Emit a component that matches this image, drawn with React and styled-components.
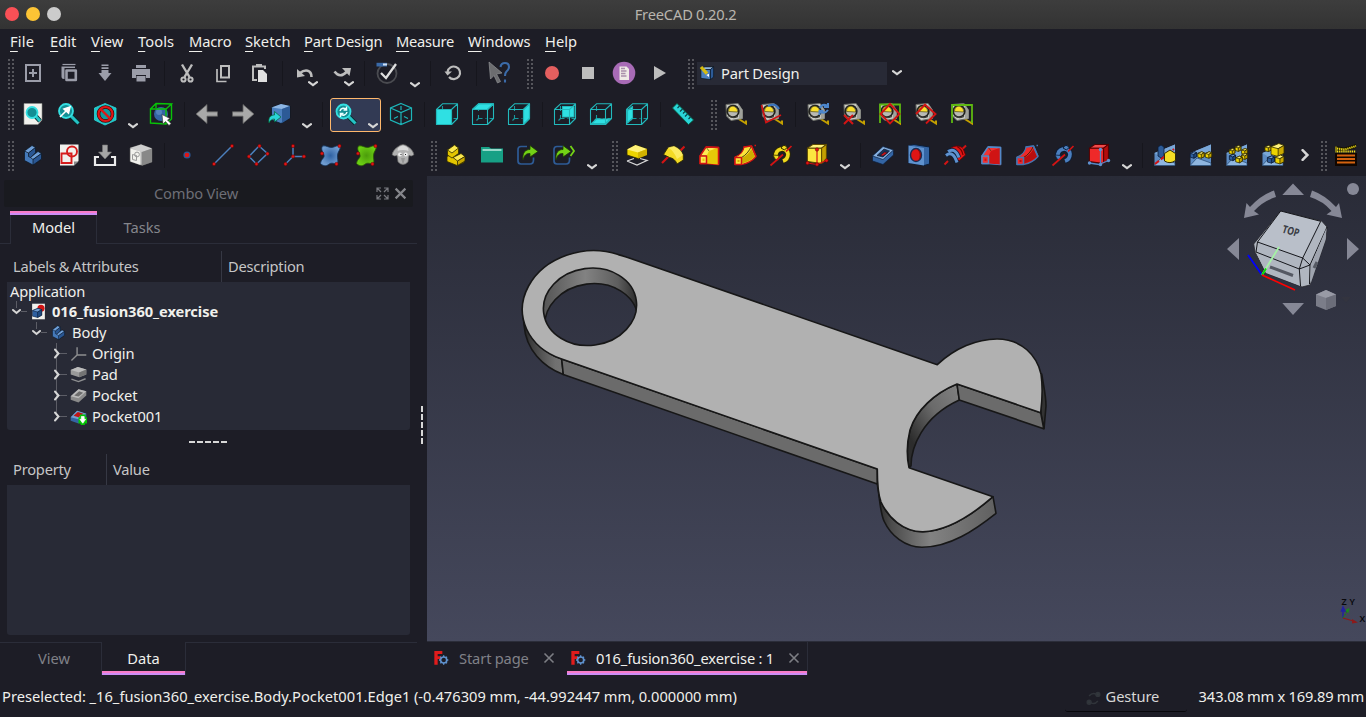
import React from 'react';
import styled, { createGlobalStyle, css } from 'styled-components';

const c = {
  bg: '#1d1d26', panel: '#282a36', line: '#2b2d39', text: '#f0f0ec', dim: '#6d6e76',
  grey: '#bdbdbd', yellow: '#fce94f', olive: '#302b00',
};

const Global = createGlobalStyle`
  * { box-sizing: border-box; }
  body { margin: 0; background: ${c.bg}; overflow: hidden; }
`;

/* ---------- layout ---------- */
const Window = styled.div`
  width: 1366px; height: 717px; display: flex; flex-direction: column; overflow: hidden;
  background: ${c.bg}; color: ${c.text}; font: 14.67px/20px "Noto Sans", sans-serif; white-space: nowrap;
  letter-spacing: -0.12px; word-spacing: -0.3px;
`;
const TitleBar = styled.header`
  height: 29px; flex: none; display: grid; grid-template-columns: 1fr auto 1fr; align-items: center;
  padding: 0 0 2px 5px; background: linear-gradient(#3d3d3d, #333333); color: #b9b5ae;
`;
const Title = styled.span`padding-top: 1px; line-height: 19px; letter-spacing: -0.17px;`;
const Lights = styled.div`display: flex; gap: 7px;`;
const Light = styled.i`width: 14px; height: 14px; border-radius: 50%; background: ${p => p.$color};`;
const MenuBar = styled.nav`height: 24px; flex: none; display: flex; padding: 2px 0 0 10px;`;
const MenuItem = styled.span`
  width: ${p => p.$w}px; letter-spacing: ${p => p.$ls || 0}px;
  u { text-underline-offset: 4px; text-decoration-thickness: 1px; }
`;
const ToolRow = styled.div`height: 41px; flex: none; display: flex; padding-top: 5px;`;
const Grip = styled.i`
  flex: none; width: 6px; height: 30px; margin: 1px 1px 0 ${p => (p.$first ? 8 : 10)}px;
  background: repeating-linear-gradient(transparent 0 2px, ${c.bg} 2px 4px),
    linear-gradient(90deg, #56565c 2px, transparent 2px 4px, #56565c 4px);
`;
const Divider = styled.i`flex: none; width: 1px; height: 25px; margin: 3px 4px 0 5px; background: #16161d;`;
const Tool = styled.button`
  flex: none; position: relative; display: flex; width: ${p => (p.$menu ? 56 : 36)}px; height: 32px;
  margin: 0; padding: 3px 6px; border: 0; background: none;
  ${p => p.$active && css`
    width: 51px; margin: -1px 2px 0 3px; height: 34px; padding: 3px;
    border: 1px solid #ffb86c; border-radius: 3px; background: #323a54;
  `}
`;
const Corner = styled.span`position: absolute; display: flex; right: ${p => p.$right}px; bottom: ${p => p.$up || 0}px;`;
const Overflow = styled.span`width: 20px; height: 30px; display: flex; align-items: center; justify-content: center; padding-left: 8px;`;
const Combo = styled.div`
  width: 190px; height: 23px; margin: 4px 4px 0 2px; padding: 0 2px 2px; display: flex; align-items: center; gap: 6px; background: ${c.panel};
`;
const ComboArrow = styled.span`padding: 10px 0 0 1px; display: flex; height: 20px;`;

const Main = styled.main`flex: none; height: 505px; display: flex;`;
const Side = styled.aside`width: 417px; flex: none; display: flex; flex-direction: column;`;
const DockTitle = styled.div`
  width: 409px; height: 27px; margin: 4px 0 0 4px; padding: 0 6px 1px 0; flex: none; border-radius: 2px; background: #191a1f; color: ${c.dim};
  display: grid; grid-template-columns: 12px 1fr auto auto; align-items: center; gap: 5px; text-align: center; 
  svg { margin-top: 1px; }
`;
const TopTabs = styled.div`height: 33px; margin-top: 4px; display: flex; flex: none;`;
const TopTab = styled.div`
  width: ${p => p.$w}px; text-align: center; padding-top: ${p => (p.$on ? 3 : 7)}px; color: ${p => (p.$on ? c.text : '#85868c')};
  letter-spacing: 0; border: 0 solid ${c.line}; line-height: ${p => (p.$on ? 20 : 19)}px;
  ${p => (p.$on
    ? css`border-width: 0 1px; &::before { content: ''; display: block; height: 4px; margin: -3px -1px 2px; background: linear-gradient(#f87cc8 50%, #cd8cf5 50%); }`
    : css`border-bottom-width: 1px;`)}
`;
const TabFill = styled.i`flex: ${p => (p.$w ? `0 0 ${p.$w}px` : 1)}; border: 0 solid ${c.line}; ${p => (p.$top ? 'border-top-width: 1px' : 'border-bottom-width: 1px')};`;
const Head = styled.div`height: 31px; margin: ${p => p.$mt}px 0 0 7px; display: flex; flex: none; color: #c6c6c6; letter-spacing: -0.22px; word-spacing: -0.5px;`;
const HeadCell = styled.div`width: ${p => p.$w}px; padding: 5px ${p => (p.$line ? 6 : 5)}px; border-left: 1px solid ${p => (p.$line ? '#363844' : 'transparent')};`;
const Tree = styled.div`width: 403px; height: ${p => p.$h}px; margin-left: 7px; flex: none; border-radius: 0 0 3px 3px; background: ${c.panel};`;
const Root = styled.div`height: 19px; padding-left: 3px; line-height: 18px; letter-spacing: -0.2px;`;
const Row = styled.div`
  height: 21px; display: flex; align-items: center; padding-left: ${p => p.$depth * 20}px; font-weight: ${p => (p.$bold ? 700 : 400)};
`;
const TreeIcon = styled.span`display: flex; margin: 0 5px 0 3px;`;
const Label = styled.span`padding-bottom: 2px; letter-spacing: ${p => (p.$bold ? -0.07 : -0.12)}px;`;
const HSplit = styled.i`width: 38px; height: 2px; margin: 11px 0 0 189px; flex: none; background: repeating-linear-gradient(90deg, #d8d8d8 0 6px, transparent 6px 8px);`;
const VSplit = styled.i`width: 2px; height: 38px; margin: 230px 4px 0; flex: none; background: repeating-linear-gradient(#d8d8d8 0 6px, transparent 6px 8px);`;
const View3D = styled.div`width: 939px; height: 465px; svg { display: block; }`;
const Work = styled.section`display: flex; flex-direction: column; flex: none; background: ${c.bg};`;
const BottomTabs = styled.div`height: 34px; margin-top: ${p => p.$mt}px; display: flex; flex: none; border-top: ${p => (p.$rule ? 1 : 0)}px solid #2b2d39;`;
const BottomTab = styled.div`
  width: ${p => p.$w}px; height: 33px; padding: ${p => (p.$on ? '6px 0 0' : '5px 0 0 7px')}; text-align: center; color: ${p => (p.$on ? c.text : '#808188')};
  letter-spacing: 0; border: 0 solid ${c.line}; border-top-width: ${p => (p.$on ? 0 : 1)}px;
  ${p => p.$on && css`
    border-width: 0 1px; display: flex; flex-direction: column; justify-content: space-between;
    &::after { content: ''; height: 4px; background: linear-gradient(#f87cc8 50%, #cd8cf5 50%); }
  `}
`;
const DocTab = styled.div`
  width: ${p => p.$w}px; height: 33px; display: flex; flex-direction: column; justify-content: space-between; color: ${p => (p.$on ? c.text : '#808188')};
  ${p => p.$on && css`
    border-right: 1px solid ${c.line};
    &::after { content: ''; height: 4px; background: linear-gradient(#f87cc8 50%, #cd8cf5 50%); }
  `}
`;
const DocLabel = styled.div`
  height: 29px; display: flex; align-items: center; padding: ${p => (p.$on ? '3px 7px 0 3px' : '3px 12px 0 6px')};
  span { flex: 1; padding: 0 0 1px 10px; }
`;
const Status = styled.footer`flex: 1; display: flex; align-items: center; padding: 0 2px 7px;`;
const Message = styled.span`flex: 1; letter-spacing: 0.02px;`;
const NavStyle = styled.span`
  width: 122px; height: 27px; display: flex; align-items: center; gap: 5px; padding-left: 21px; border-bottom: 1px solid #08080b; border-radius: 3px;
  margin: 3px 12px -3px 0; color: #d8d8d6; letter-spacing: -0.1px;
`;
const NavName = styled.span`padding-bottom: 4px;`;
const Dimensions = styled.span`letter-spacing: -0.12px; word-spacing: -0.4px;`;

/* ---------- drawings ---------- */
const Fixed = styled.svg`flex: none;`;
const Svg = ({ s = 24, children, vb = '0 0 24 24' }) => <Fixed width={s} height={s} viewBox={vb} fill="none">{children}</Fixed>;
const Chevron = ({ right, size = 10 }) => (
  <Svg s={size} vb="0 0 10 10"><path d={right ? 'M3 1 7 5 3 9' : 'M1 3.2 5 6.2 9 3.2'} stroke="#d6d6d6" strokeWidth="2.1" strokeLinecap="round" /></Svg>
);
const Close = ({ s = 12, color = '#7d7e84', w = 1.6 }) => <Svg s={s} vb="0 0 12 12"><path d="M1.500 1.500l9 9m0-9l-9 9" stroke={color} strokeWidth={w} /></Svg>;

const Lens = ({ x, y, r, tx, ty, children }) => (
  <g>
    <path d={`M${x + r * 0.7} ${y + r * 0.7}L${tx} ${ty}`} stroke="#042a2a" strokeWidth="4.6" />
    <path d={`M${x + r * 0.7} ${y + r * 0.7}L${tx} ${ty}`} stroke="#25c3c5" strokeWidth="3" />
    <circle cx={x} cy={y} r={r} fill="#138f94" stroke="#34e0e2" strokeWidth="1.8" />
    {children}
  </g>
);
const Wire = ({ fill }) => (
  <g stroke="#22b9bc" strokeWidth="1.1" strokeLinejoin="round">
    <path d="M7.5 4v5m0 4v3.500h4m4 0h-1M7.500 16.500L5.500 18.500M18.500 16.500H22" stroke="#179a9d" />
    {fill && <path d={fill} fill="#2fe0e3" />}
    <path d="M1.500 7.500h15v15h-15zM1.500 7.500L7.500 1.800H22.500L16.500 7.500M22.500 1.800V16.500L16.500 22.500" />
  </g>
);
const Cube = ({ x = 0, y = 0, s = 1, top = '#fff27a', left = '#edd400', right = '#c4a000', edge = c.olive, sw = 1 }) => (
  <g transform={`translate(${x} ${y}) scale(${s})`} stroke={edge} strokeWidth={sw / s} strokeLinejoin="round">
    <path d="M2 6L8 2H22L17 6z" fill={top} /><path d="M2 6H17V22L2 20z" fill={left} /><path d="M17 6L22 2V18L17 22z" fill={right} />
  </g>
);
const Blue = p => <Cube top="#9cc2ea" left="#4b80bf" right="#2c5a96" edge="#0b1521" {...p} />;
const Iso = ({ x, y, r, blue }) => {
  const [t, l, d, e] = blue ? ['#6f9dd3', '#2e5f9f', '#204a80', '#0b1d38'] : ['#fff27a', '#edd400', '#c9a800', c.olive];
  return (
    <g transform={`translate(${x} ${y}) scale(${r})`} stroke={e} strokeWidth={0.8 / r} strokeLinejoin="round">
      <path d="M-1-.5L.2-1 1-.7V.5L.1 1-1 .7z" fill={l} /><path d="M-1-.5L.2-1 1-.7 .1-.2z" fill={t} /><path d="M.1-.2L1-.7V.5L.1 1z" fill={d} />
    </g>
  );
};
const Tape = () => (
  <g>
    <path d="M14 16.500L22 21.500V18.500" stroke="#c4a000" strokeWidth="2" />
    <path d="M2 2.500L14 1.500 18.500 8V16.500L7 18.500 2.500 14z" fill="#cbccc6" stroke="#6c6e68" />
    <path d="M14 1.500L18.500 8V16.500L15 17V6z" fill="#9fa19b" />
    <ellipse cx="9" cy="9.300" rx="5.800" ry="5.800" fill="#b9bab4" stroke="#22231f" strokeWidth="1.700" transform="rotate(20 9 9.300)" />
    <path d="M7 4.500A5 5 0 0 1 13.500 10L4.500 9.500A5 5 0 0 1 7 4.500z" fill="#fadf2d" stroke="#3a3500" strokeWidth=".6" />
    <path d="M4 13.500Q9 17 14 14.500" stroke="#3b3c37" strokeWidth="1.300" />
  </g>
);
const Dot = ({ p }) => p.map(([x, y], i) => <circle key={i} cx={x} cy={y} r="1.700" fill="#e01515" stroke="#5a0000" strokeWidth=".5" />);
const BodyShape = ({ a = '#6f9fd8', b = '#4479ba', d = '#2a5692', e = '#0b1521' }) => (
  <g stroke={e} strokeWidth=".7" strokeLinejoin="round">
    <path d="M3.500 8L11 2.500 14.500 4.500V10L17 8.500 20.500 10.500V16L12 22 3.500 17.500z" fill={b} />
    <path d="M3.500 8L11 2.500 14.500 4.500 7.500 10z" fill={a} /><path d="M7.500 10L14.500 4.500V9.500L9.500 14.500 7.500 13.500z" fill={d} />
    <path d="M9.500 14.500L17 8.500 20.500 10.500 12 16.500z" fill={a} /><path d="M12 16.500L20.500 10.500V16L12 22z" fill={d} />
  </g>
);
const Patch = ({ a, b, e, id }) => (
  <g>
    <radialGradient id={id}><stop offset="0" stopColor={b} /><stop offset="1" stopColor={a} /></radialGradient>
    <path d="M3.500 3C7 2 10 5 13 4.500S18 2 21.500 2.500C22 6 19 8 18.500 12S20 18 18 21.500C14 20 12 19.500 9.500 21.500S4 23 1.500 20.500C2 16 6 15 5 12S1.500 6 3.500 3z" fill={`url(#${id})`} stroke={e} strokeWidth=".8" />
  </g>
);
const Arrow = () => <path d="M8 17C7 9 11 6.500 15 6.500V2.500L23 8.500 15 14V10.500C11 10.500 9.500 12 8 17z" fill="#73d216" stroke="#1d3a05" strokeWidth=".8" />;
const LinkBox = () => <path d="M11 3.500H5Q2 3.500 2 6.500V18Q2 21 5 21H14Q17.500 21 17.500 17V14.500" stroke="#2e5b96" strokeWidth="1.700" />;

/* additive and subtractive solids share the same silhouettes */
const Loft = ({ a, b, e }) => (
  <g stroke={e} strokeWidth="1.500" strokeLinejoin="round">
    <path d="M3 13L9 4 21.500 4.500V21.500L9.500 20.500H3z" fill={a} />
    <path d="M9.500 13L12 8 21.500 4.500V21.500L9.500 20.500z" fill={b} stroke="none" />
    <path d="M9 4L12 8M3 13H9.500V20.500H3z" stroke={c.olive} strokeWidth=".6" />
    <path d="M9 4L21.500 4.500V21.500" /><path d="M3 13H9.500V20.500H3z" fill={a} /><path d="M5.500 15.500h2V18h-2z" fill={b} stroke="none" />
  </g>
);
const Pipe = ({ a, b, e }) => (
  <g strokeLinejoin="round">
    <path d="M2 14Q10 11 11 4L18.500 3 23 13.500Q18 19.500 9 21.500H2z" fill={a} stroke={e} strokeWidth="1.200" />
    <path d="M9 15Q15 12 18.500 6L22 13.500Q17 18.500 9 20.500z" fill={b} />
    <path d="M8.500 14.500Q15 11 18.500 3" stroke="#201a00" strokeWidth=".8" />
    <path d="M10.500 4L18.500 3 23 13.500" stroke={e} strokeWidth="1.700" />
    <path d="M2 14.500H8.500V21.500H2z" fill={a} stroke={e} strokeWidth="1.500" /><path d="M4.500 17h2v2h-2z" fill={b} /><path d="M21.500 2.500h1.500" stroke={e} strokeWidth="1.700" />
  </g>
);
const Helix = ({ a, e, rod }) => (
  <g>
    <path d="M7 14C5 5 18 3 19 11 19 15 17 17 14 18" stroke={e} strokeWidth="5.400" /><path d="M7 14C5 5 18 3 19 11 19 15 17 17 14 18" stroke={a} strokeWidth="3.700" />
    <path d="M12 5Q15 0 18 4.500L15.500 7z" fill={a} stroke={e} /><path d="M4 12L10 12.500 9 17.500 6 16z" fill={a} stroke={e} strokeWidth=".8" />
    <path d="M1.500 22.500L14 11.500M17 8.500L22.500 3" stroke={rod} strokeWidth="1.700" />
  </g>
);
const Wedge = ({ children }) => <g><path d="M1.500 10L22 1.500V22.500H1.500z" fill="#5d8cc4" /><path d="M1.500 22L8 15 22 20V22.500H1.500z" fill="#8fb6e0" stroke="#23466f" strokeWidth=".7" /><path d="M1.500 10L22 1.500V10L9 15z" fill="#7aa7d8" />{children}</g>;

const g = '#9b9da9', G = c.grey;
const icons = {
  new: <path d="M5 4H19V20H5zM12 8v8M8 12h8" stroke={g} strokeWidth="2" />,
  open: <g stroke={g}><path d="M5.500 3.500h13" strokeWidth="1.200" /><path d="M4.500 5.500H18V7H7.500V18H7Q4.500 18 4.500 15.500z" fill={g} stroke="none" /><path d="M9.500 9.500H18.800V19H9.500z" strokeWidth="2.600" strokeLinejoin="round" /></g>,
  save: <path d="M8.500 3.500h7v1.600h-7zM8.500 6.200h7v1.700h-7zM8.500 9h7v3H18.500L12 20 5.500 12h3z" fill={g} />,
  print: <g fill={g}><path d="M7 4h10v3H7zM3 8h18v9h-4v-3H7v3H3z" /><path d="M7.500 15h9v5.500h-9z" /></g>,
  cut: <g stroke={G} strokeWidth="2"><path d="M7 3.500L14.500 16M17 3.500L9.500 16" strokeWidth="2.400" /><circle cx="8.500" cy="18.500" r="2.100" /><circle cx="15.500" cy="18.500" r="2.100" /></g>,
  copy: <g stroke={G} strokeWidth="2"><path d="M10 5H18V16.500H10z" /><path d="M6 8V20.500H15.500" strokeWidth="1.700" /></g>,
  paste: <g><path d="M10 19H6V5.500H18V8" stroke={G} strokeWidth="2" /><path d="M9 3h6v3H9z" fill={G} /><path d="M11 9h5l4 4v8h-9z" fill="#e0e0e0" /></g>,
  undo: <g><path d="M18.500 16C18.500 8.500 12 8 7 12" stroke={G} strokeWidth="2.600" /><path d="M4 8V16.500L12 15z" fill={G} /></g>,
  redo: <g><path d="M5.500 10.500Q11 18 18 10.500" stroke={G} strokeWidth="2.600" /><path d="M13 7L22 7 20.500 15z" fill={G} /></g>,
  check: <g><circle cx="12" cy="12.500" r="9.500" stroke="#4a4b50" strokeWidth="1.800" /><path d="M6 12L11 17 21 3" stroke="#e0e0e0" strokeWidth="2.300" /><path d="M1.500 1.800H12V5.500H1.500z" fill="#3a6aa8" /><path d="M8 2.500h4v2H8z" fill="#cfe0f5" /></g>,
  refresh: <g><path d="M8 16A6.300 6.300 0 1 0 6.500 11" stroke={G} strokeWidth="2.200" /><path d="M3.500 10.500h7.500L6.500 14.500z" fill={G} /></g>,
  whats: <g><path d="M2 1L15 12 9.500 13 13.500 20.500 10.500 22 7 14.500 3.500 18z" fill="#6c6d70" stroke="#8f9093" strokeWidth=".7" /><path d="M13.500 6Q14 2 18 2T22 6Q22 8.500 19.500 10.500 18 12 18 15M18 18.500v3" stroke="#3b6ba9" strokeWidth="2.100" /></g>,
  record: <circle cx="12" cy="12" r="7" fill="#e45f5f" />,
  stop: <path d="M6 6h12v12H6z" fill={G} />,
  macro: <g><circle cx="12" cy="12" r="11.300" fill="#a86bb6" /><path d="M7.500 5.500H14.500L17 8V19H7.500z" fill="#efeae6" /><path d="M9 10h5.500M9 12.500h4.500M9 15h5.500M9 7.500h4" stroke="#a98fab" strokeWidth="1.300" /></g>,
  play: <path d="M6 5L18 12 6 19z" fill={G} />,
  pd: <g><Blue x={1} y={1} s={.95} /><path d="M3 3L12 13" stroke="#d6bc10" strokeWidth="5" /><path d="M11 15l4 3v-5z" fill="#fff" /></g>,

  fitAll: <g><path d="M3 1.500H21V18L17 22.500H3z" fill="#f1f1ed" stroke="#8b8d88" strokeWidth=".6" /><Lens x={11} y={10.5} r={5.5} tx={19} ty={19} /></g>,
  fitSel: <Lens x={9} y={9} r={7} tx={21.5} ty={21.5}><path d="M3 15L9 9M7 7l6-2-1.500 6z" fill="#fff" stroke="#fff" strokeWidth="1.600" /></Lens>,
  style: <g><path d="M12 1.500L23 6V18L12 23 1.500 18V6z" fill="#20c6c9" stroke="#2bd4d6" strokeWidth=".8" /><circle cx="12.500" cy="12" r="7" fill="#0f9a9d" stroke="#420606" strokeWidth="3.600" /><path d="M8 7.500l9 9" stroke="#e01515" strokeWidth="2.400" /><circle cx="12.500" cy="12" r="7" stroke="#e01515" strokeWidth="2.200" /></g>,
  box: <g><circle cx="12" cy="12" r="7" fill="#3465a4" /><circle cx="10" cy="10" r="3" fill="#729fcf" opacity=".5" /><path d="M1.500 7H17V22L1.500 21zM1.500 7L7 1.500 22.500 2 17 7M22.500 2V17L17 22M7 2V6" stroke="#08c408" strokeWidth="1.400" /><path d="M13 12.500L14 22 16.500 19.500 20 23.500 22 21.500 18.500 18 21 16.500z" fill="#fff" stroke="#333" strokeWidth=".6" /></g>,
  back: <path d="M1 12L12 2.500V9.800H22.500V14.200H12V21.500z" fill="#a9a9a9" stroke="#5f5f5f" strokeWidth=".8" />,
  fwd: <path d="M23 12L12 2.500V9.800H1.500V14.200H12V21.500z" fill="#a9a9a9" stroke="#5f5f5f" strokeWidth=".8" />,
  link: <g><path d="M4.500 5.500L14 2 23 4V16L14 21.500 4.500 18z" fill="#4b80bf" stroke="#0b1521" strokeWidth=".8" /><path d="M4.500 5.500L14 2 23 4 15 7z" fill="#8db6e4" /><path d="M15 7L23 4V16L15 21z" fill="#2c5a96" /><path d="M2 21C1 15 4 13 7.500 13V9.500L14 15 7.500 20V17C5 17 3.500 18 2 21z" fill="#2ad5d8" stroke="#063" strokeWidth=".7" /></g>,
  sync: <Lens x={9.5} y={9.5} r={7} tx={21.5} ty={21.5}><path d="M6 9A3.800 3.800 0 0 1 12.500 7.500M13 10A3.800 3.800 0 0 1 6.500 12M12.500 4.500V8H9.500M6.500 15V11.500H9.500" stroke="#e8ffff" strokeWidth="1.500" /></Lens>,
  iso: <path d="M12 1.500L22.500 6V18L12 22.500 1.500 18V6zM1.500 6L12 10.500 22.500 6M12 10.500V22.500M12 4V8M5 16.500L9 14.500M19 16.500L15 14.500" stroke="#1db6b9" strokeWidth="1.200" />,
  front: <Wire fill="M1.500 7.500h15v15h-15z" />, top: <Wire fill="M1.500 7.500L7.500 1.800H22.500L16.500 7.500z" />, right: <Wire fill="M16.500 7.500L22.500 1.800V16.500L16.500 22.500z" />,
  rear: <Wire fill="M9.500 4.500H21V15H9.500z" />, bottom: <Wire fill="M2.500 21.500L7.500 17H21L16.500 21.500z" />, left: <Wire fill="M2.500 8.500L7.500 4.500V16L2.500 21z" />,
  ruler: <g><path d="M6 1.500L22.500 18 17.500 22.500 1.500 6z" fill="#2ad5d8" stroke="#064" strokeWidth=".8" /><path d="M8.500 4L6.500 6M11.500 7L9 9.500M14 9.500L12 11.500M16.500 12L14 14.500M19.500 15L17.500 17" stroke="#0a4446" strokeWidth="1.100" /></g>,
  tape: <Tape />,
  tapeAngle: <g><Tape /><path d="M8 4Q15 0 19 7" stroke="#3b74bd" strokeWidth="2.200" /><path d="M1.500 3L6 20.500 21 13" stroke="#d21414" strokeWidth="1.700" /></g>,
  tapeRefresh: <g><Tape /><path d="M14 6Q16 1.500 21 3.500M22 1v4h-4M22 8Q19 12 14.500 10M13.500 13V9h4" stroke="#4c86cc" strokeWidth="2" /></g>,
  tapeX: <g><Tape /><path d="M2 13l9 9m0-9l-9 9" stroke="#d21414" strokeWidth="2" /></g>,
  tapeAll: <g><Tape /><path d="M2 21V2.500H22V21" stroke="#5eb811" strokeWidth="1.800" /><path d="M12 2L21.500 12 12 21.500 2.500 12z" stroke="#d21414" strokeWidth="1.900" /></g>,
  tape3d: <g><Tape /><path d="M2 12L11 2.500 21.500 12 12 21.500" stroke="#d21414" strokeWidth="1.900" /></g>,
  tapeDelta: <g><Tape /><path d="M2 21V3H22V21" stroke="#5eb811" strokeWidth="1.800" /></g>,

  body: <BodyShape />,
  sketch: <g><path d="M3 1.500H21.500V18L17 22.500H3z" fill="#f1f1ed" /><path d="M17 22.500V18.500H21.500z" fill="#888" /><path d="M4.500 10.500H14.500V20H4.500z" stroke="#d51c1c" strokeWidth="1.900" /><circle cx="15" cy="8.500" r="5" stroke="#d51c1c" strokeWidth="1.900" /></g>,
  attach: <g><path d="M6 14H2V22H22V14H18" stroke="#ececec" strokeWidth="2.200" /><path d="M9.500 2h5v7H18.500L12 16 5.500 9h4z" fill="#a6a6a6" stroke="#777" strokeWidth=".6" /></g>,
  map: <g><path d="M1 5L12 1.500 23 5.500V19L13 22.500 1 18.500z" fill="#adadad" stroke="#4f4f4f" strokeWidth=".7" /><path d="M1 5L12 1.500 23 5.500 13 9z" fill="#cfcfcf" /><path d="M13 9L23 5.500V19L13 22.500z" fill="#888" /><path d="M1.500 5.500L11.500 8.500V22L1.500 18.500z" fill="#f1f1ed" /><path d="M3.500 11.500L7.500 12.500V17.500L3.500 16.500z" stroke="#9a9a9a" /><circle cx="8" cy="11.500" r="2.400" stroke="#9a9a9a" /></g>,
  point: <g><circle cx="12" cy="12" r="3.600" fill="#2b5691" /><circle cx="12" cy="12" r="2.300" fill="#e01515" /></g>,
  line: <g><path d="M3 21L21 3" stroke="#4c80bd" strokeWidth="1.500" /><Dot p={[[3, 21], [21, 3]]} /></g>,
  plane: <g><path d="M12 3L20.500 10.500 9.500 21 2 13.500z" stroke="#4c80bd" strokeWidth="1.500" /><Dot p={[[12.500, 3], [20.500, 10.800], [9.500, 21], [2, 13.500]]} /></g>,
  lcs: <g><path d="M10 3V13.500L2.500 21M10 13.500H21" stroke="#4c80bd" strokeWidth="1.500" /><Dot p={[[10, 3], [10, 13.500], [2.500, 21], [21, 13.500]]} /></g>,
  binder: <g><Patch id="pb" a="#6f9cd0" b="#2f62a3" e="#12335c" /><Dot p={[[20.500, 3], [3, 10.500], [17.500, 21]]} /></g>,
  sub: <g><Patch id="pg" a="#6ccf14" b="#4c9c0b" e="#2a5a04" /><Dot p={[[20.500, 3], [3, 10.500], [17.500, 21]]} /></g>,
  sheep: <g><path d="M6.500 4Q12-1 17.500 4 22 7 23 11.500 21 14 18 12.500L17 19Q12 24 7 19L6 12.500Q3 14 1 11.500 2 7 6.500 4z" fill="#b2b2b2" stroke="#5f5f5f" strokeWidth=".7" /><path d="M7 5Q12 0 17 5L17.500 8Q12 6 6.500 8z" fill="#d9d9d9" /><path d="M10 15L12 22 14 15z" fill="#969696" /><circle cx="9" cy="11.500" r="1.900" fill="#eee" /><circle cx="14.800" cy="11.500" r="1.900" fill="#eee" /><path d="M9.500 11.500h1M14 11.500h1" stroke="#222" /></g>,

  part: <g stroke={c.olive} strokeWidth=".8" strokeLinejoin="round"><path d="M3 13.500L8 11 20 15V19.500L13 22.500 3 18.500z" fill="#e3c500" /><path d="M9 14.500L17 10.500 21 13.500 13.500 18z" fill={c.yellow} /><path d="M13.500 18L21 13.500V18L13.500 22.500z" fill="#c9a800" /><path d="M3.500 7L10.500 2 14.500 5V10.500L8 15 3.500 12z" fill="#e3c500" /><path d="M3.500 7L10.500 2 14.500 5 8 10z" fill={c.yellow} /></g>,
  folder: <g><path d="M1 4H9L11 5.500H23V19.500H1z" fill="#17a085" /><path d="M2.500 7H21.500" stroke="#e9fff9" strokeWidth="1.200" /></g>,
  linkTo: <g><LinkBox /><g transform="translate(-1 0)"><Arrow /></g></g>,
  linkSub: <g><LinkBox /><g transform="translate(-4 0)"><Arrow /></g><path d="M18.500 3L22 8 18.500 13" stroke="#73d216" strokeWidth="1.800" /></g>,
  pad: <g><path d="M2 18L9 15.500M15 15.500L22 17.500 12 22 2 18" stroke="#d8d8d8" strokeWidth="1.300" /><path d="M2 6.500L10.500 2 22 6V12L13 15.500 2 12z" fill="#edd400" stroke={c.olive} strokeWidth=".8" /><path d="M2 6.500L10.500 2 22 6 13 9.500z" fill="#fff27a" /><path d="M13 9.500L22 6V12L13 15.500z" fill="#d2b300" /></g>,
  revolve: <g><path d="M1 20L8 13M19 8L23.500 3.500" stroke="#d21414" strokeWidth="2.200" /><path d="M2.500 11.500L7 4.500 13 3Q20 6 22.300 12V17L16 21Q14 15.500 8.500 14.500z" fill="#f3da24" stroke={c.olive} strokeWidth=".9" strokeLinejoin="round" /><path d="M7 4.500L13 3Q20 6 22 12L16 16Q13 8 7 4.500z" fill="#fff27a" opacity=".7" /></g>,
  loft: <Loft a="#fdea55" b="#e6ca08" e="#d21414" />, pipe: <Pipe a="#fbe33a" b="#cfae00" e="#d21414" />,
  helix: <Helix a="#f0d91e" e={c.olive} rod="#d21414" />,
  prim: <g><Cube x={.5} y={-.5} s={.95} left="#fbe640" edge="#5c4a00" /><path d="M2 20L12 21.500 21.500 17.500M12 21.500V6" stroke="#d21414" strokeWidth="1.200" /><Dot p={[[2.500, 20], [12, 21.500], [21.500, 17.500], [12, 6.500]]} /></g>,
  pocket: <g stroke="#0b1d38" strokeWidth=".7" strokeLinejoin="round"><path d="M1.500 13L12 3.500 22.500 7V12L12 21.500 1.500 18z" fill="#3465a4" /><path d="M1.500 13L12 3.500 22.500 7 12 16.500z" fill="#86b0e0" /><path d="M6 12.500L13 6 18.500 8 12 14z" fill="#1c3355" /><path d="M9 12.500L13.500 9 17 9.500 12 13z" fill="#d21414" /></g>,
  hole: <g><path d="M1.500 2.500L7 1.500 22.500 4V21L17 22.500 1.500 20z" fill="#3465a4" stroke="#0b1d38" /><path d="M1.500 2.500L17 5V22.500L1.500 20z" fill="#5f92cf" /><ellipse cx="9" cy="12" rx="5.500" ry="6.500" fill="#e01515" stroke="#1c2c50" strokeWidth="1.400" /><path d="M10 6a5 6.500 0 0 1 1 12 9 9 0 0 0-1-12" fill="#7d0a0a" /></g>,
  groove: <g><path d="M8 5Q14 1 20 5L22.500 12 16 18 9 12z" fill="#e01515" stroke="#600" strokeWidth=".8" /><path d="M3 12.500Q10 7 14 19.500M5 8.500Q12 4 16 14.500" stroke="#0b1d38" strokeWidth="4.400" /><path d="M3 12.500Q10 7 14 19.500M5 8.500Q12 4 16 14.500" stroke="#5f92cf" strokeWidth="3" /><path d="M14 3.500Q19 6 20 12" stroke="#700" strokeWidth="1.200" /><path d="M1.500 21.500L5 18M20 5.500L23 2.500" stroke="#d21414" strokeWidth="2" /></g>,
  subLoft: <Loft a="#ef3333" b="#d01414" e="#5488c7" />, subPipe: <Pipe a="#ef2929" b="#b80e0e" e="#4575b2" />,
  subHelix: <Helix a="#4b7fbe" e="#0b1d38" rod="#d21414" />,
  subPrim: <g><Cube x={.5} y={-.5} s={.95} top="#f04a4a" left="#ef2929" right="#b30c0c" edge="#500" /><path d="M2 20L12 21.500 21.500 17.500M13.500 21V6" stroke="#5488c7" strokeWidth="1.300" />{[[2.500, 20], [13.500, 21.500], [21.500, 17.500], [13.500, 6.500]].map(([x, y]) => <circle key={x + y} cx={x} cy={y} r="1.700" fill="#5f92cf" />)}</g>,
  mirror: <Wedge><path d="M5 4L8 2 11 4V13L8 15 5 13z" fill="#2c5a96" stroke="#0b1d38" strokeWidth=".8" /><path d="M2 21l19-15" stroke="#d21414" strokeWidth="2" strokeDasharray="5 2.500" /><path d="M11.500 10.500L17 7 22.500 10.500V17.500Q17 21.500 11.500 18z" fill="#f5de25" stroke={c.olive} /></Wedge>,
  linear: <Wedge><Iso blue x={4.500} y={12} r={3.200} /><Iso x={12} y={12} r={3.200} /><Iso x={19.500} y={12} r={3.200} /></Wedge>,
  polar: <Wedge><Iso x={13} y={5.500} r={2.900} /><Iso x={7} y={8.500} r={2.900} /><Iso x={19.500} y={8.500} r={2.900} /><Iso blue x={7.500} y={14.500} r={3.100} /><Iso x={19.500} y={13.500} r={2.900} /><Iso x={14} y={16.500} r={3.300} /></Wedge>,
  multi: <Wedge><Iso x={7} y={5.500} r={3.100} /><Iso x={16.500} y={7} r={6.500} /><Iso blue x={10} y={16.500} r={3.600} /><Iso x={18.500} y={16.500} r={4.400} /></Wedge>,
  clap: <g><path d="M1 10H23V23H1z" fill="#100600" /><path d="M1.500 3L10 4.500 22 1V5L10 8 1.500 9z" fill="#171300" /><path d="M2 3.500V9.500" stroke="#f3df1a" /><path d="M3 5.500L11 6.500 22 3M3 8.500H22" stroke="#f3df1a" strokeWidth="2" strokeDasharray="1.300 .8" /><path d="M3 12.500H21M3 16H21M3 19.500H21" stroke="#d4620f" strokeWidth="1.900" /></g>,
  doc: <g><path d="M3 1H21V23H3z" fill="#f1f1ed" /><circle cx="15.500" cy="7.500" r="5" fill="#d21414" /><Iso blue x={10} y={14} r={6.500} /></g>,
  origin: <path d="M10 3V14L2 22M10 14H23" stroke="#8d8e90" strokeWidth="2" />,
  padGrey: <g><path d="M2 18.500L12 22 22 18" stroke="#8d8e90" strokeWidth="2" /><path d="M1 5.500L11 1.500 23 5V12L13 16 1 12z" fill="#9a9a9a" /><path d="M1 5.500L11 1.500 23 5 13 9z" fill="#bcbcbc" /><path d="M13 9L23 5V12L13 16z" fill="#747474" /></g>,
  pocketGrey: <g><path d="M1 13L12 3 23 6V12L12 22 1 18z" fill="#8a8a8a" /><path d="M1 13L12 3 23 6 12 16z" fill="#b9b9b9" /><path d="M6 12L13 6 18.500 8 12 13.500z" fill="#6c6c6c" /></g>,
  pocketTip: <g><path d="M1 13L10 4 23 8V14L12 22 1 18z" fill="#3465a4" /><path d="M1 13L10 4 23 8 12 16z" fill="#729fcf" /><path d="M5 11L11 5.500 19 8 12 13z" fill="#c01414" /><path d="M14 9h8v4h2v9h-3v2h-6v-2h-3v-9h2z" fill="#05c405" /><path d="M16 12h4v4h2L18 21.500 14 16h2z" fill="#fff" stroke="#fff" /></g>,
  fc: <g><path d="M2 1.500H14V6H7V9.500H12V13.500H7V22H2z" fill="#e01c1c" /><circle cx="16" cy="15" r="4.600" stroke="#5f92cf" strokeWidth="2.400" /><path d="M16 8v3M16 19v3M9 15h3M20 15h3M11 10l2 2M19 18l2 2M21 10l-2 2M13 18l-2 2" stroke="#5f92cf" strokeWidth="2" /></g>,
  gesture: <g stroke="#30343a" strokeWidth="2.500"><path d="M5 8Q10 2 16 5M19 16Q14 22 8 19" /><circle cx="19" cy="5.500" r="3" fill="#33383d" /><circle cx="5" cy="18" r="3" fill="#33383d" /></g>,
};

const T = ({ i, menu, active, corner }) => (
  <Tool $menu={menu} $active={active}>
    <Svg>{icons[i]}</Svg>
    {(menu || active || corner) && <Corner $right={active ? 2 : 5} $up={corner ? 1 : 0}><Chevron /></Corner>}
  </Tool>
);
const Tools = ({ names }) => names.split(' ').map((n, k) => {
  if (n === '|') return <Divider key={k} />;
  if (n === ':') return <Grip key={k} $first={k === 0} />;
  const flag = n.slice(-1);
  const id = n.replace(/[+*^]$/, '');
  return <T key={k} i={id} menu={flag === '+'} active={flag === '*'} corner={flag === '^'} />;
});

const TOP = 'M561.7 359A67.2 55.4 -7.8 0 1 618.3 254.6Q623 255.800 627 257.300L937.3 364.7C955 348 977 339 997 339C1022 339 1037 356 1041 374C1043 388 1042 402 1040.7 412.7L957 384C935 393 916 410 910 430C907 442 906.5 456 909 467.7L993 496.7C972 515 948 531 923 531.7C903 532 888 517 881 502C878 494 877.3 482 877.3 469Z';
const HOLE = 'M543.7 313.1A46.2 38.1 -7.8 0 1 636.3 300.5A46.2 38.1 -7.8 0 1 543.7 313.1Z';

const Model = () => (
  <g stroke="#171717" strokeWidth="1.600" strokeLinejoin="round">
    <path d="M522.600 309C524 335 542 352 561.700 359L563.300 374.500C543 367 526 350 524 325z" fill="url(#arcSide)" />
    <path d="M561.700 359L877.300 469V484L563.300 374.500z" fill="#6b6b6b" />
    <path d="M877.300 484C880 500 880 512 884 521C891 536 905 547 922 547.300C950 547 975 530 996 513.300L993 496.700C972 515 948 531 923 531.700C903 532 888 517 881 502z" fill="url(#jawSide)" />
    <path d="M1041.700 374C1044 388 1046 396 1046 406L1044 428.700 1040.700 412.700z" fill="#333" />
    <path d="M957 384C935 393 916 410 910 430C907 442 906.500 456 909 467.700L911 466C911 448 922 417 959.300 400z" fill="url(#slotSide)" />
    <path d="M957 384L1040.700 412.700 1043.700 428.700 959.300 400z" fill="#6b6b6b" />
    <path d={HOLE} fill="url(#holeSide)" mask="url(#crescent)" stroke="none" />
    <g clipPath="url(#holeClip)"><path d={HOLE} transform="translate(1.500 15.500)" /></g>
    <path d={TOP + HOLE} fill="#b1b1b1" fillRule="evenodd" />
  </g>
);

const NavCube = () => (
  <g>
    <g fill="#868896">
      <path d="M1282.300 195L1293 183.500 1304 195zM1282.300 303L1293 315 1304 303zM1239 238V260L1227 249zM1347 238V260L1359 249z" />
      <circle cx="1353" cy="189" r="6" />
      <path d="M1274 190.500L1276 197Q1263 201 1254 211L1259 214.500 1244 218 1246.500 203 1250 207Q1261 195 1274 190.500zM1312 190.500L1310 197Q1323 201 1331.500 211L1326.500 214.500 1342 218 1339 203 1336 207Q1325 195 1312 190.500z" />
    </g>
    <path d="M1280.700 211L1321.700 221 1327 227 1326 239 1310 285 1302 287 1266 273 1255 252 1253.700 244z" fill="#b0b6c0" stroke="#24252b" strokeWidth=".8" />
    <path d="M1280.700 211L1320.700 221.300 1302.700 258 1257.500 242z" fill="#b9bfc9" stroke="#15161b" strokeWidth="1" />
    <path d="M1256 252L1299.300 269 1300.500 286 1266 273z" fill="#b0b6c0" />
    <path d="M1257.500 242L1256 252 1299.300 269 1302.700 258M1299.300 269L1300.500 286M1302.700 258L1310 265 1309.500 284M1299.300 269L1310 265M1310 265L1327 227" stroke="#15161b" fill="none" />
    <path d="M1311 265L1326.500 228 1325.500 240 1310.500 284z" fill="#9fa4af" />
    <text transform="matrix(.76 .2 -.3 .95 1281.500 232.500)" fontFamily="Noto Sans" fontSize="11" fontWeight="700" letterSpacing="0" fill="#3a3c44">TOP</text>
    <path d="M1270 267L1293 275.500" stroke="#555963" strokeWidth="3" />
    <path d="M1314 268L1317 262" stroke="#555963" strokeWidth="3" />
    <g strokeWidth="1.800"><path d="M1262 275L1248 255" stroke="#0000ff" /><path d="M1262 275L1279 247" stroke="#a5f2a5" /><path d="M1262 275L1266 268.500" stroke="#00e000" /><path d="M1262 275L1295 290" stroke="#ff0000" /></g>
    <path d="M1316 294.500L1326 290 1336 294.500V306L1326 310 1316 306z" fill="#7b7d89" /><path d="M1316 294.500L1326 290 1336 294.500 1326 298z" fill="#989aa5" /><path d="M1326 298L1336 294.500V306L1326 310z" fill="#6b6d79" />
    <path d="M1341 297H1351L1346 302.500z" fill="#33343f" />
  </g>
);
const Axes = () => (
  <g>
    <path d="M1343 618V609M1341.500 611h3.500L1343 607z" stroke="#2222a0" strokeWidth="1.400" fill="#2222a0" />
    <path d="M1343 618L1348 610" stroke="#1c7a1c" strokeWidth="1.400" strokeDasharray="2 1" /><path d="M1345.500 610L1349.500 608 1348.500 613z" fill="#1c8a1c" />
    <path d="M1343 618L1355 621.500" stroke="#8c1a1a" strokeWidth="1.300" /><path d="M1352 619L1358 622.500 1352 623.500z" fill="#8c1a1a" />
    <g fontFamily="Noto Sans" fontSize="9" fontWeight="600" letterSpacing="0" fill="#08080c"><text x="1341.500" y="605">Z</text><text x="1349.500" y="605">Y</text><text x="1359.500" y="622">X</text></g>
  </g>
);
const Viewport = () => (
  <View3D>
    <svg width="939" height="465" viewBox="427 176 939 465">
      <defs>
        <linearGradient id="sky" x2="0" y2="1"><stop stopColor="#292b37" /><stop offset="1" stopColor="#45485c" /></linearGradient>
        <linearGradient id="arcSide"><stop stopColor="#1d1d1d" /><stop offset=".2" stopColor="#3c3c3c" /><stop offset=".8" stopColor="#707070" /><stop offset="1" stopColor="#747474" /></linearGradient>
        <linearGradient id="jawSide"><stop stopColor="#2a2a2a" /><stop offset=".12" stopColor="#4b4b4b" /><stop offset=".45" stopColor="#828282" /><stop offset="1" stopColor="#606060" /></linearGradient>
        <linearGradient id="slotSide" x1="1" y1="0" x2="0" y2="1"><stop stopColor="#828282" /><stop offset=".4" stopColor="#6a6a6a" /><stop offset=".8" stopColor="#2c2c2c" /></linearGradient>
        <linearGradient id="holeSide"><stop stopColor="#555" /><stop offset=".45" stopColor="#828282" /><stop offset=".8" stopColor="#5e5e5e" /><stop offset="1" stopColor="#2c2c2c" /></linearGradient>
        <clipPath id="holeClip"><path d={HOLE} /></clipPath>
        <mask id="crescent"><rect x="530" y="250" width="130" height="120" fill="#fff" /><path d={HOLE} transform="translate(1.500 15.500)" fill="#000" /></mask>
      </defs>
      <rect x="427" y="176" width="939" height="465" fill="url(#sky)" />
      <g fill="none"><Model /></g><NavCube /><Axes />
    </svg>
  </View3D>
);

const Branch = ({ open, last }) => (
  <svg width="20" height="21" viewBox="0 0 20 21" fill="none">
    <path d={open ? 'M9.500 0V7M14 10.500H20' : `M9.500 0V${last ? 10 : 21}M12 10.500H20`} stroke="#5c5d66" />
    <path d={open ? 'M6 9L9.500 12 13 9' : 'M8 6.500L11.500 10.500 8 14.500'} stroke="#d6d6d6" strokeWidth="2" strokeLinecap="round" />
  </svg>
);
const Item = ({ depth, icon, text, bold, open, last }) => (
  <Row $depth={depth} $bold={bold}><Branch open={open} last={last} /><TreeIcon><Svg s={17}>{icons[icon]}</Svg></TreeIcon><Label $bold={bold}>{text}</Label></Row>
);

const menus = [['File', 40, 0.2], ['Edit', 41], ['View', 47, 0.1], ['Tools', 51, 0.1], ['Macro', 56, -0.15], ['Sketch', 59], ['Part Design', 92, -0.12], ['Measure', 72, -0.25], ['Windows', 77], ['Help', 40]];

export default function App() {
  return (
    <Window>
      <Global />
      <TitleBar>
        <Lights><Light $color="#fa5056" /><Light $color="#fcc435" /><Light $color="#cbcbcb" /></Lights>
        <Title>FreeCAD 0.20.2</Title>
      </TitleBar>
      <MenuBar>{menus.map(([m, w, ls]) => <MenuItem key={m} $w={w} $ls={ls}><u>{m[0]}</u>{m.slice(1)}</MenuItem>)}</MenuBar>
      <ToolRow>
        <Tools names=": new open save print | cut copy paste | undo^ redo^ | check+ | refresh | whats" />
        <Grip /><Tools names="record stop macro play" /><Grip />
        <Combo><Svg s={16}>{icons.pd}</Svg>Part Design</Combo>
        <ComboArrow><Chevron /></ComboArrow>
      </ToolRow>
      <ToolRow>
        <Tools names=": fitAll fitSel style+ box | back fwd link+ | sync* iso | front top right | rear bottom left | ruler" />
        <Grip /><Tools names="tape tapeAngle | tapeRefresh tapeX tapeAll tape3d tapeDelta" />
      </ToolRow>
      <ToolRow>
        <Tools names=": body sketch attach map | point line plane lcs binder sub sheep" />
        <Grip /><Tools names="part folder linkTo linkSub+" />
        <Grip /><Tools names="pad revolve loft pipe helix prim+ | pocket hole groove subLoft subPipe subHelix subPrim+ | mirror linear polar multi" />
        <Overflow><Chevron right size={12} /></Overflow>
        <Grip /><Tools names="clap" />
      </ToolRow>
      <Main>
        <Side>
          <DockTitle>
            <i /><span>Combo View</span>
            <Svg s={13} vb="0 0 13 13"><path d="M1 5V1H5M1 1L5 5M8 1h4v4M12 1L8 5M1 8v4h4M1 12L5 8M12 8v4H8M12 12L8 8" stroke="#77787e" strokeWidth="1.200" /></Svg>
            <Close s={13} color="#85868b" w={2} />
          </DockTitle>
          <TopTabs><TabFill $w={10} /><TopTab $w={87} $on>Model</TopTab><TopTab $w={90}>Tasks</TopTab><TabFill /></TopTabs>
          <Head $mt={7}><HeadCell $w={214}>Labels &amp; Attributes</HeadCell><HeadCell $w={180} $line>Description</HeadCell></Head>
          <Tree $h={148}>
            <Root>Application</Root>
            <Item depth={0} icon="doc" text="016_fusion360_exercise" bold open />
            <Item depth={1} icon="body" text="Body" open />
            <Item depth={2} icon="origin" text="Origin" />
            <Item depth={2} icon="padGrey" text="Pad" />
            <Item depth={2} icon="pocketGrey" text="Pocket" />
            <Item depth={2} icon="pocketTip" text="Pocket001" last />
          </Tree>
          <HSplit />
          <Head $mt={11}><HeadCell $w={99}>Property</HeadCell><HeadCell $w={180} $line>Value</HeadCell></Head>
          <Tree $h={150} />
          <BottomTabs $mt={7}><BottomTab $w={101}>View</BottomTab><BottomTab $w={85} $on>Data</BottomTab><TabFill $top /></BottomTabs>
        </Side>
        <VSplit />
        <Work>
          <Viewport />
          <BottomTabs $mt={0} $rule>
            <DocTab $w={140}><DocLabel><Svg s={16}>{icons.fc}</Svg><span>Start page</span><Close /></DocLabel></DocTab>
            <DocTab $w={241} $on><DocLabel $on><Svg s={16}>{icons.fc}</Svg><span>016_fusion360_exercise : 1</span><Close /></DocLabel></DocTab>
          </BottomTabs>
        </Work>
      </Main>
      <Status>
        <Message>Preselected: _16_fusion360_exercise.Body.Pocket001.Edge1 (-0.476309 mm, -44.992447 mm, 0.000000 mm)</Message>
        <NavStyle><Svg s={15}>{icons.gesture}</Svg><NavName>Gesture</NavName></NavStyle>
        <Dimensions>343.08 mm x 169.89 mm</Dimensions>
      </Status>
    </Window>
  );
}
